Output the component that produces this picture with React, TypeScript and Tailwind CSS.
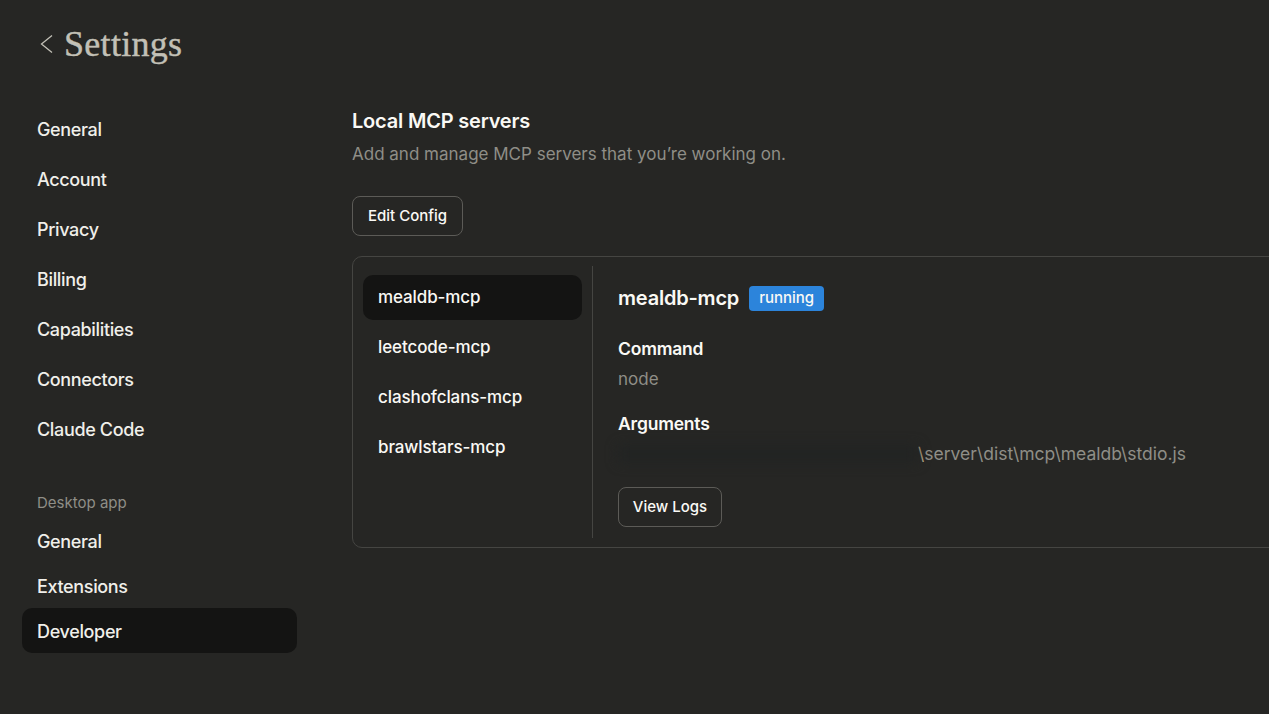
const accountLinks = ["General", "Account", "Privacy", "Billing", "Capabilities", "Connectors", "Claude Code"];
const desktopLinks = ["General", "Extensions", "Developer"];
const servers = ["mealdb-mcp", "leetcode-mcp", "clashofclans-mcp", "brawlstars-mcp"];

function NavItem({ label, active }: { label: string; active?: boolean }) {
	return (
		<div
			className={
				"flex h-[45px] items-center rounded-[10px] px-[15px] pt-[1px] text-[18px] tracking-[-0.35px] font-medium text-[#f0efea] " +
				(active ? "bg-[#141413]" : "")
			}
		>
			{label}
		</div>
	);
}

export default function App() {
	return (
		<div className="h-[714px] w-full overflow-hidden bg-[#262624] font-['Inter',sans-serif]">
			<header className="flex h-[88px] items-center gap-[11px] pl-[39px]">
				<svg width="14" height="20" viewBox="0 0 14 20" fill="none" stroke="#c2c0b6" strokeWidth="1.3">
					<path d="M13 1.5 L2.5 10 L13 18.5" />
				</svg>
				<h1 className="font-['Liberation_Serif',serif] text-[36px] tracking-[0.3px] text-[#c2c0b6] [-webkit-text-stroke:0.4px_#c2c0b6]">
					Settings
				</h1>
			</header>
			<div className="flex">
				<nav className="ml-[22px] w-[275px] shrink-0 pt-[18px]">
					<div className="flex flex-col gap-[5px]">
						{accountLinks.map((l) => (
							<NavItem key={l} label={l} />
						))}
					</div>
					<p className="mt-[37px] h-[30px] px-[15px] text-[15px] leading-[30px] text-[#8f8e87]">Desktop app</p>
					<div className="flex flex-col">
						{desktopLinks.map((l) => (
							<NavItem key={l} label={l} active={l === "Developer"} />
						))}
					</div>
				</nav>
				<main className="ml-[55px] w-[1000px] shrink-0 pt-[19px]">
					<h2 className="text-[20px] leading-[28px] font-semibold tracking-[-0.2px] text-[#faf9f5]">Local MCP servers</h2>
					<p className="mt-[5px] text-[17px] leading-[28px] text-[#8f8e87]">Add and manage MCP servers that you’re working on.</p>
					<button className="mt-[28px] block h-[40px] w-[111px] rounded-[8px] border border-[#5c5b57] text-[15px] font-medium text-[#faf9f5]">
						Edit Config
					</button>
					<section className="mt-[20px] flex h-[292px] rounded-[10px] border border-[#454542] px-[10px] py-[9px]">
						<div className="w-[219px] shrink-0 pt-[9px]">
							<div className="flex flex-col gap-[5px]">
								{servers.map((s, i) => (
									<div
										key={s}
										className={
											"flex h-[45px] items-center rounded-[10px] px-[15px] text-[17px] font-medium tracking-[-0.1px] text-[#faf9f5] " +
											(i === 0 ? "bg-[#141413]" : "")
										}
									>
										{s}
									</div>
								))}
							</div>
						</div>
						<div className="ml-[10px] border-l border-[#454542] pl-[25px]">
							<div className="flex h-[52px] items-center gap-[10px] pt-[12px]">
								<h3 className="text-[20px] font-semibold tracking-[-0.2px] text-[#faf9f5]">mealdb-mcp</h3>
								<span className="flex h-[25px] items-center rounded-[4px] bg-[#2c84db] px-[10px] text-[15px] font-medium text-[#faf9f5]">
									running
								</span>
							</div>
							<p className="mt-[19px] text-[17.5px] leading-[24px] font-semibold tracking-[-0.2px] text-[#faf9f5]">Command</p>
							<p className="mt-[6px] text-[17px] leading-[24px] text-[#8f8e87]">node</p>
							<p className="mt-[21px] text-[17.5px] leading-[24px] font-semibold tracking-[-0.2px] text-[#faf9f5]">Arguments</p>
							<div className="mt-[6px] flex h-[24px] items-center">
								<div className="h-[18px] w-[300px] bg-[#222423] blur-[6px]" />
								<span className="text-[17.5px] text-[#8f8e87]">
									<span className="text-[#b8a88a]">{"\\"}</span>
									{"server\\dist\\mcp\\mealdb\\stdio.js"}
								</span>
							</div>
							<button className="mt-[21px] block h-[40px] w-[104px] rounded-[8px] border border-[#5c5b57] text-[15px] font-medium text-[#faf9f5]">
								View Logs
							</button>
						</div>
					</section>
				</main>
			</div>
		</div>
	);
}
